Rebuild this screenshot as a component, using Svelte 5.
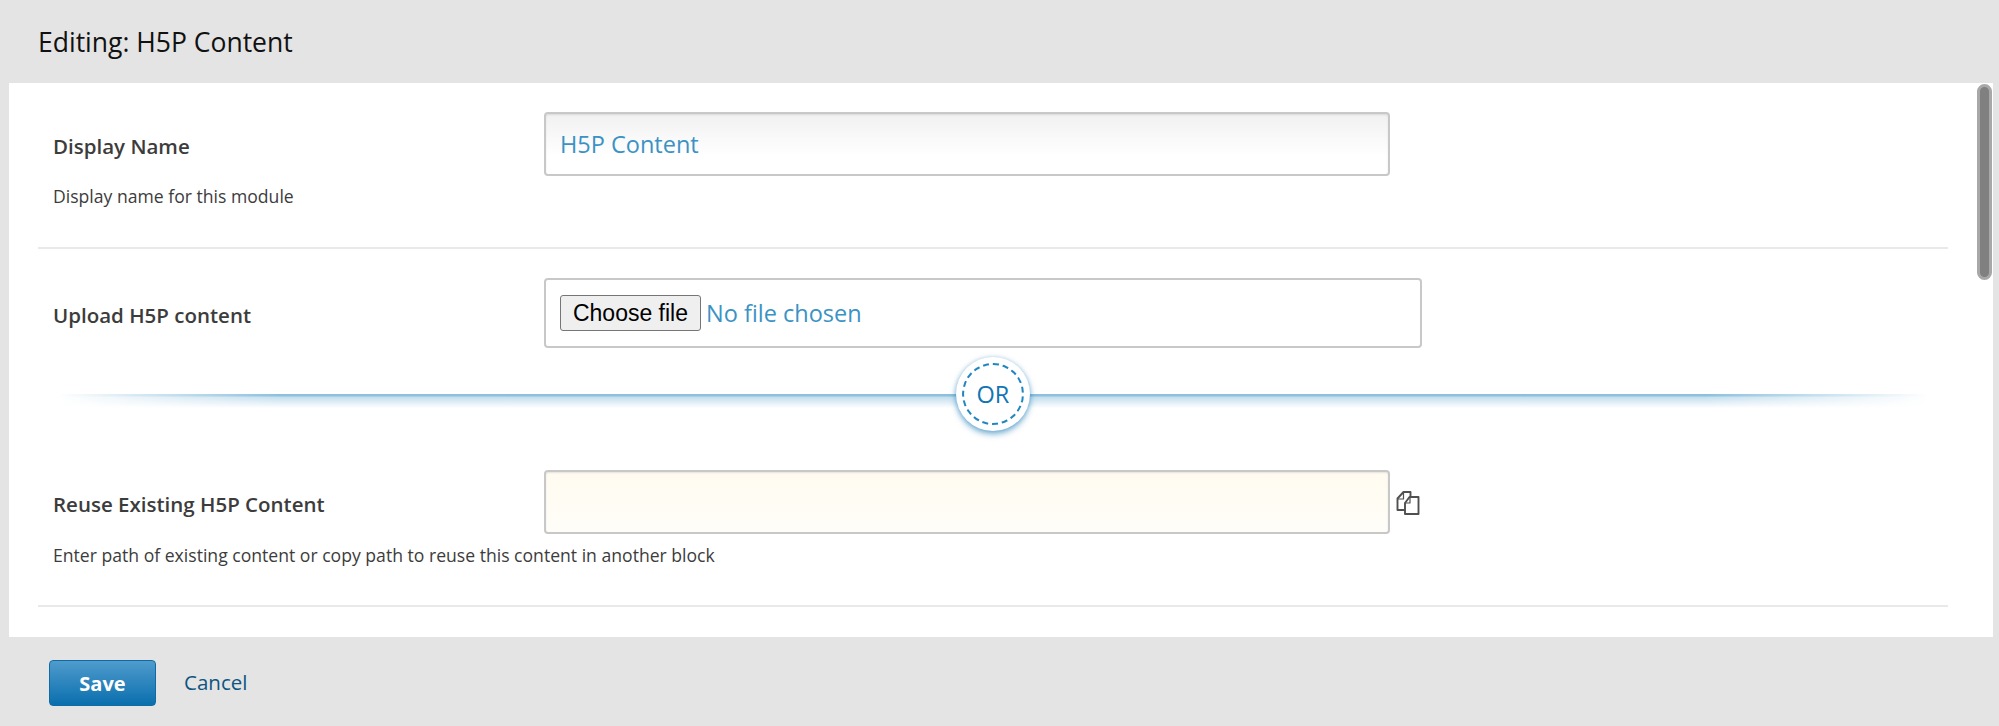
<script>
  let displayName = $state('H5P Content');
  let reusePath = $state('');
</script>

<div class="modal">
  <header class="modal__title">Editing: H5P Content</header>

  <div class="panel">
    <div class="panel__list">
      <div class="field field--name">
        <div class="field__row">
          <label class="field__label" for="display-name">Display Name</label>
          <input id="display-name" class="field__input" type="text" bind:value={displayName} />
        </div>
        <p class="field__help">Display name for this module</p>
      </div>

      <div class="field field--upload">
        <div class="field__row">
          <label class="field__label" for="upload">Upload H5P content</label>
          <div class="file">
            <button type="button" class="file__button" id="upload">Choose file</button>
            <span class="file__name">No file chosen</span>
          </div>
        </div>
      </div>

      <div class="or">
        <div class="or__line"></div>
        <div class="or__badge"><span class="or__ring">OR</span></div>
      </div>

      <div class="field field--reuse">
        <div class="field__row">
          <label class="field__label" for="reuse">Reuse Existing H5P Content</label>
          <input id="reuse" class="field__input field__input--warm" type="text" bind:value={reusePath} />
          <button type="button" class="copy" aria-label="Copy path">
            <svg width="24" height="24" viewBox="0 0 24 24" fill="none" stroke="#505050" stroke-width="1.9" stroke-linejoin="round" stroke-linecap="round">
              <path d="M8 19H1.5V7.5L7.5 1H14.5V6" />
              <path d="M7.5 2V8H2" stroke-width="1.2" />
              <path d="M9 12L13.5 6H22.5V23H9Z" fill="#fff" />
              <path d="M14 6.5V12H9.5" stroke-width="1.2" />
            </svg>
          </button>
        </div>
        <p class="field__help">Enter path of existing content or copy path to reuse this content in another block</p>
      </div>
    </div>

    <div class="scroll-thumb"></div>
  </div>

  <footer class="actions">
    <button type="button" class="actions__save">Save</button>
    <a href="#cancel" class="actions__cancel">Cancel</a>
  </footer>
</div>

<style>
  :global(body) {
    background: #e4e4e4;
  }

  .modal {
    font-family: "Open Sans", "Noto Sans", sans-serif;
    height: 726px;
    background: #e4e4e4;
    display: flex;
    flex-direction: column;
    overflow: hidden;
  }

  .modal__title {
    height: 83px;
    box-sizing: border-box;
    padding: 25px 0 0 38px;
    font-size: 26.5px;
    line-height: 34px;
    color: #111;
  }

  .panel {
    position: relative;
    height: 554px;
    margin: 0 6px 0 9px;
    background: #fff;
    overflow: hidden;
  }

  .panel__list {
    width: 1910px;
    margin-left: 29px;
  }

  .field {
    padding: 29px 0 0 15px;
  }

  .field--name,
  .field--reuse {
    border-bottom: 2px solid #e9e9e9;
  }

  .field--name {
    height: 166px;
    box-sizing: border-box;
  }

  .field--upload {
    height: 134px;
    box-sizing: border-box;
  }

  .field--reuse {
    height: 202px;
    box-sizing: border-box;
    padding-top: 65px;
  }

  .field__row {
    display: flex;
    align-items: center;
  }

  .field__label {
    width: 491px;
    flex: none;
    padding-top: 4px;
    font-size: 20.5px;
    font-weight: 600;
    color: #3c3c3c;
  }

  .field__input {
    width: 846px;
    height: 64px;
    box-sizing: border-box;
    padding: 0 14px;
    border: 2px solid #c8c8c8;
    border-radius: 4px;
    background: linear-gradient(#f1f1f1, #ffffff 70%);
    box-shadow: inset 0 1px 2px rgba(0, 0, 0, 0.1);
    font: 400 23.5px "Open Sans", sans-serif;
    color: #3b92c4;
    outline: none;
  }

  .field__input--warm {
    background: linear-gradient(#fffbf0, #fffdf8);
  }

  .field__help {
    margin: 9px 0 0;
    font-size: 17.6px;
    line-height: 22px;
    color: #3c3c3c;
  }

  .field--reuse .field__help {
    margin-top: 10px;
  }

  .file {
    width: 878px;
    height: 70px;
    box-sizing: border-box;
    display: flex;
    align-items: center;
    gap: 5px;
    padding: 0 14px;
    border: 2px solid #c8c8c8;
    border-radius: 4px;
  }

  .file__button {
    width: 141px;
    height: 36px;
    padding: 0;
    border: 1.5px solid #767676;
    border-radius: 3px;
    background: #efefef;
    font: 400 23px "Liberation Sans", Arial, sans-serif;
    color: #000;
  }

  .file__name {
    font-size: 23.5px;
    color: #3b92c4;
  }

  .or {
    position: relative;
    height: 22px;
  }

  .or__line {
    position: absolute;
    top: 11px;
    left: 20px;
    right: 20px;
    height: 14px;
    background:
      linear-gradient(90deg, rgba(255, 255, 255, 1), rgba(255, 255, 255, 0) 12%, rgba(255, 255, 255, 0) 88%, rgba(255, 255, 255, 1)),
      linear-gradient(#8cc0de 0, #8cc0de 2px, #c3deee 3px, #ffffff 100%);
  }

  .or__badge {
    position: absolute;
    top: -26px;
    left: 918px;
    width: 74px;
    height: 74px;
    box-sizing: border-box;
    padding: 6px;
    border-radius: 50%;
    background: #fff;
    box-shadow: 0 3px 6px rgba(0, 110, 175, 0.55), 0 0 4px rgba(0, 110, 175, 0.2);
  }

  .or__ring {
    display: flex;
    align-items: center;
    justify-content: center;
    width: 100%;
    height: 100%;
    box-sizing: border-box;
    border: 2px dashed #1f86c2;
    border-radius: 50%;
    font-size: 23.5px;
    color: #0f75b4;
  }

  .copy {
    margin: 2px 0 0 6px;
    padding: 0;
    width: 24px;
    height: 24px;
    border: none;
    background: none;
  }

  .scroll-thumb {
    position: absolute;
    top: 1px;
    right: 1px;
    width: 15px;
    height: 196px;
    box-sizing: border-box;
    border: 3px solid #a8a8a8;
    border-radius: 8px;
    background: #808080;
  }

  .actions {
    display: flex;
    align-items: center;
    gap: 28px;
    padding: 23px 0 0 49px;
  }

  .actions__save {
    width: 107px;
    height: 46px;
    border: 1px solid #0f6ba6;
    border-radius: 4px;
    background: linear-gradient(#4f9bcc, #0a6fae);
    font: 700 20px "Open Sans", sans-serif;
    color: #fff;
  }

  .actions__cancel {
    margin-top: -2px;
    font-size: 20.5px;
    color: #0e5580;
    text-decoration: none;
  }
</style>
